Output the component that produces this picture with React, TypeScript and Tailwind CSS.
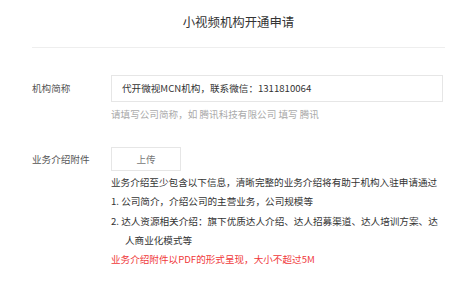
const font = { fontFamily: '"Noto Sans CJK SC", "Noto Sans", sans-serif' };

export default function App() {
  return (
    <div
      className="w-[450px] h-[300px] overflow-hidden bg-white pl-[32px] pr-[5px] text-[#333]"
      style={font}
    >
      <div className="h-[48px] flex items-center justify-center border-b border-[#eeeeee] text-[12.4px] text-[#333] pb-[3px]">
        小视频机构开通申请
      </div>

      <div className="mt-[27px] flex">
        <div className="w-[79px] h-[27px] flex items-center text-[9.6px] text-[#555]">
          机构简称
        </div>
        <div className="flex-1 pr-[2px]">
          <div className="h-[27px] border border-[#e6e6e6] flex items-center pl-[10px] text-[9.6px] text-[#333]">
            代开微视MCN机构，联系微信：1311810064
          </div>
          <div className="mt-[5px] h-[14px] flex items-center text-[9.6px] text-[#aaaaaa]">
            请填写公司简称，如 腾讯科技有限公司 填写 腾讯
          </div>
        </div>
      </div>

      <div className="mt-[26px] flex">
        <div className="w-[79px] h-[24px] flex items-center text-[9.6px] text-[#555]">
          业务介绍附件
        </div>
        <div className="flex-1">
          <div className="w-[70px] h-[24px] border border-[#e6e6e6] flex items-center justify-center text-[9.6px] text-[#777]">
            上传
          </div>
          <div className="mt-[2px] text-[9.6px] leading-[19.3px] text-[#333] whitespace-nowrap">
            <div>业务介绍至少包含以下信息，清晰完整的业务介绍将有助于机构入驻申请通过</div>
            <div>1. 公司简介，介绍公司的主营业务，公司规模等</div>
            <div>2. 达人资源相关介绍：旗下优质达人介绍、达人招募渠道、达人培训方案、达</div>
            <div className="pl-[14px]">人商业化模式等</div>
            <div className="text-[#f0383a]">业务介绍附件以PDF的形式呈现，大小不超过5M</div>
          </div>
        </div>
      </div>
    </div>
  );
}
